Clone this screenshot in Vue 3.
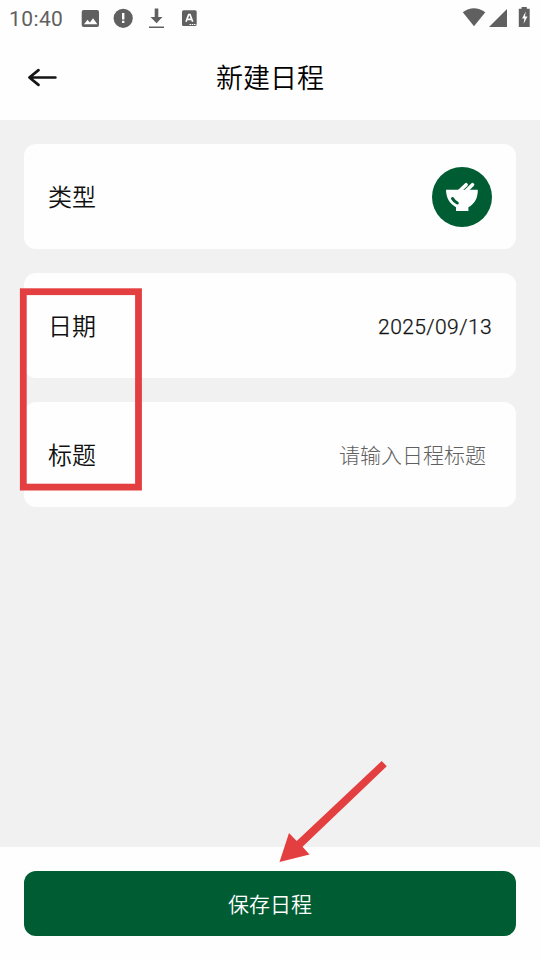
<script setup>
import { ref } from 'vue'

const date = ref('2025/09/13')
const title = ref('')
</script>

<template>
  <div class="screen">
    <div class="status">
      <span class="time">10:40</span>
      <svg class="tray" width="120" height="24" viewBox="80 6 120 24">
        <rect x="81.700" y="10" width="17.300" height="17" rx="2" fill="#606060" />
        <path d="M84 24.300l3.500-4.500 2.400 2.700 3.100-4.200 4.400 6z" fill="#fff" />
        <circle cx="123.2" cy="18.3" r="9.6" fill="#606060" />
        <path d="M122 13h2.4v6.4H122zM122 20.8h2.4v2.3H122z" fill="#fff" />
        <path d="M154.7 8.500h3.600v8.500h4.200l-6 6.200-6-6.200h4.200zM149 26.500h15v1.600h-15z" fill="#606060" />
        <rect x="182" y="10.3" width="14.7" height="15.8" rx="1.5" fill="#606060" />
        <path d="M186 21.8l2.7-7.3h1.3l2.7 7.3M187 19.4h4.7" fill="none" stroke="#fff" stroke-width="1.7" />
        <path d="M189.5 24.5h7" stroke="#fff" stroke-width="1.1" stroke-dasharray="1.5 .7" />
      </svg>
      <svg class="signals" width="72" height="24" viewBox="460 6 72 24">
        <path d="M462.8 12.3Q473.8 4.2 485.3 12.3L474 26.2z" fill="#606060" />
        <path d="M507 9v18h-18z" fill="#606060" />
        <path d="M521.6 7h5.2v1.7h2.9V27h-10.9V8.700h2.800z" fill="#606060" />
        <path d="M525.700 11.500l-3.600 7h2.300l-.8 5.300 3.900-7.200h-2.500z" fill="#fff" />
      </svg>
    </div>

    <header class="header">
      <svg class="back" width="32" height="22" viewBox="0 0 32 22">
        <path d="M29.400 10.500H3.500M12.500 3.100L3.400 10.500l9.100 7.400" fill="none" stroke="#151515" stroke-width="2.700" stroke-linecap="round" stroke-linejoin="round" />
      </svg>
      <h1>新建日程</h1>
    </header>

    <main class="form">
      <section class="card">
        <span class="label">类型</span>
        <span class="type">
          <svg width="60" height="60" viewBox="0 0 60 60">
            <path d="M14 22.800h31.800c.2 8.400-3.400 14.400-9.400 17.400v3.800H24v-3.800c-6-3.100-9.900-9-10-17.400z" fill="#fff" />
            <path d="M27.500 24l6.600-6.300M34.500 23.500l6-5.800" stroke="#fff" stroke-width="3.600" stroke-linecap="round" />
            <path d="M20.500 31.500q1.400 2.700 4.800 4.500" fill="none" stroke="#005c32" stroke-width="3" stroke-linecap="round" />
          </svg>
        </span>
      </section>
      <section class="card">
        <span class="label">日期</span>
        <span class="date">{{ date }}</span>
      </section>
      <section class="card">
        <span class="label">标题</span>
        <input v-model="title" class="input" placeholder="请输入日程标题" />
      </section>
    </main>

    <footer class="footer">
      <button class="save">保存日程</button>
    </footer>

    <svg class="marks" width="540" height="960" viewBox="0 0 540 960">
      <rect x="23.300" y="291.700" width="115.200" height="195.400" fill="none" stroke="#e33f41" stroke-width="6.800" />
      <path d="M381.700 761l5.100 5.300-84.300 80.500 7 7.700-30 7.500 9.500-29 7.700 7.900z" fill="#e33f41" />
    </svg>
  </div>
</template>

<style>
body {
  margin: 0;
}
</style>

<style scoped>
.screen {
  position: relative;
  display: flex;
  flex-direction: column;
  width: 540px;
  height: 960px;
  overflow: hidden;
  background: #f1f1f1;
  color: #111;
  font-family: "Noto Sans CJK SC", sans-serif;
  font-weight: 350;
}
.status {
  display: flex;
  align-items: center;
  box-sizing: border-box;
  height: 36px;
  padding: 0 8px 0 9px;
  background: #fefefe;
}
.time {
  width: 71px;
  padding-top: 1px;
  font: 400 21px/36px Roboto, sans-serif;
  letter-spacing: 0.4px;
  color: #606060;
}
.signals {
  margin-left: auto;
}
.header {
  display: grid;
  grid-template-columns: 32px 1fr 32px;
  align-items: center;
  box-sizing: border-box;
  height: 84px;
  padding: 0 26px;
  background: #fefefe;
}
.back {
  margin-top: -1px;
}
h1 {
  margin: 0;
  padding-bottom: 2px;
  text-align: center;
  font-size: 27px;
  font-weight: 350;
  line-height: 40px;
  color: #000;
}
.form {
  display: flex;
  flex: 1;
  flex-direction: column;
  gap: 24px;
  padding: 24px;
}
.card {
  display: flex;
  align-items: center;
  justify-content: space-between;
  box-sizing: border-box;
  height: 105px;
  padding: 0 24px;
  border-radius: 12px;
  background: #fefefe;
}
.label {
  padding-bottom: 1px;
  font-size: 24px;
  line-height: 36px;
}
.type {
  display: flex;
  width: 60px;
  height: 60px;
  border-radius: 50%;
  background: #005c32;
}
.date {
  padding-top: 2px;
  font: 300 21px/32px Roboto, sans-serif;
  letter-spacing: 0.4px;
  -webkit-text-stroke: 0.25px #111;
}
.input {
  width: 153px;
  height: 36px;
  padding: 0 0 2px;
  border: 0;
  outline: 0;
  background: transparent;
  color: #111;
  font: inherit;
  font-size: 21px;
  font-weight: 300;
}
.input::placeholder {
  color: #606060;
  opacity: 1;
}
.footer {
  box-sizing: border-box;
  height: 113px;
  padding: 24px;
  background: #fefefe;
}
.save {
  display: block;
  width: 100%;
  height: 65px;
  padding: 0 0 2px;
  border: 0;
  border-radius: 12px;
  background: #005c32;
  color: #fff;
  font: inherit;
  font-size: 21px;
  font-weight: 350;
}
.marks {
  position: absolute;
  inset: 0;
  pointer-events: none;
}
</style>
